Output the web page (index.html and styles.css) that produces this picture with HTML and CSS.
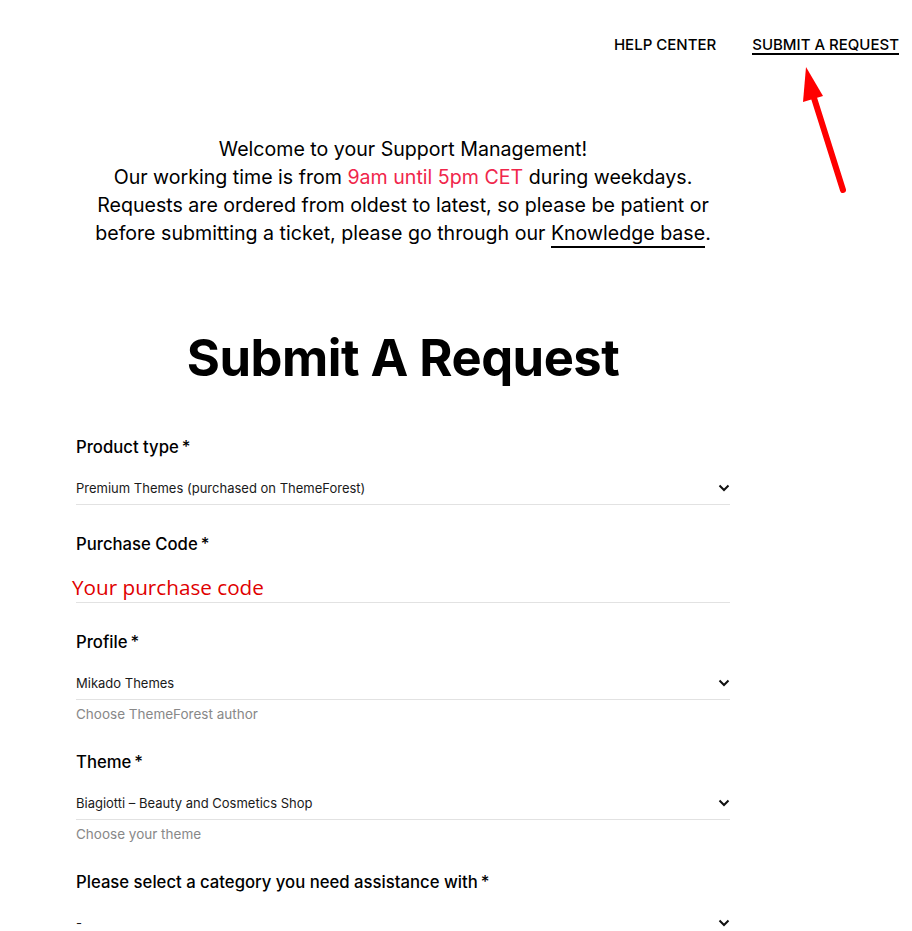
FILE: index.html
```html
<!DOCTYPE html>
<html lang="en">
<head>
    <meta charset="UTF-8">
    <meta name="viewport" content="width=device-width, initial-scale=1.0">
    <title>Submit A Request</title>
    <link rel="stylesheet" href="styles.css">
</head>
<body>
    <header class="top-bar">
        <nav class="nav">
            <a href="#" class="nav-link">HELP CENTER</a>
            <a href="#" class="nav-link active">SUBMIT A REQUEST</a>
        </nav>
        <svg class="arrow" width="60" height="140" viewBox="0 0 60 140">
            <line x1="47" y1="128" x2="18" y2="36" stroke="#ff0000" stroke-width="6" stroke-linecap="round"/>
            <polygon points="10,5 7,40 27,34" fill="#ff0000"/>
        </svg>
    </header>

    <main class="container">
        <div class="intro">
            <p>Welcome to your Support Management!</p>
            <p>Our working time is from <span class="hl">9am until 5pm CET</span> during weekdays.</p>
            <p>Requests are ordered from oldest to latest, so please be patient or</p>
            <p>before submitting a ticket, please go through our <a href="#" class="kb-link">Knowledge base</a>.</p>
        </div>

        <h1 class="title">Submit A Request</h1>

        <form class="form">
            <div class="field">
                <label>Product type<span class="req">*</span></label>
                <div class="select">
                    <span>Premium Themes (purchased on ThemeForest)</span>
                    <svg class="chev" width="12" height="8" viewBox="0 0 12 8"><path d="M1.5 1.5 L6 6 L10.5 1.5" fill="none" stroke="#111" stroke-width="2"/></svg>
                </div>
            </div>

            <div class="field">
                <label>Purchase Code<span class="req">*</span></label>
                <div class="text-input">
                    <span class="code-placeholder">Your purchase code</span>
                </div>
            </div>

            <div class="field">
                <label>Profile<span class="req">*</span></label>
                <div class="select">
                    <span>Mikado Themes</span>
                    <svg class="chev" width="12" height="8" viewBox="0 0 12 8"><path d="M1.5 1.5 L6 6 L10.5 1.5" fill="none" stroke="#111" stroke-width="2"/></svg>
                </div>
                <p class="hint">Choose ThemeForest author</p>
            </div>

            <div class="field">
                <label>Theme<span class="req">*</span></label>
                <div class="select">
                    <span>Biagiotti – Beauty and Cosmetics Shop</span>
                    <svg class="chev" width="12" height="8" viewBox="0 0 12 8"><path d="M1.5 1.5 L6 6 L10.5 1.5" fill="none" stroke="#111" stroke-width="2"/></svg>
                </div>
                <p class="hint">Choose your theme</p>
            </div>

            <div class="field">
                <label>Please select a category you need assistance with<span class="req">*</span></label>
                <div class="select">
                    <span>-</span>
                    <svg class="chev" width="12" height="8" viewBox="0 0 12 8"><path d="M1.5 1.5 L6 6 L10.5 1.5" fill="none" stroke="#111" stroke-width="2"/></svg>
                </div>
            </div>
        </form>
    </main>
</body>
</html>
```

FILE: styles.css
```css
* {
    box-sizing: border-box;
    margin: 0;
    padding: 0;
}

body {
    font-family: 'Inter', 'Roboto', sans-serif;
    color: #000;
    background: #fff;
}

.top-bar {
    position: relative;
    height: 112px;
}

.nav {
    display: flex;
    justify-content: flex-end;
    gap: 36px;
    padding: 36px 13px 0 0;
}

.nav-link {
    font-size: 15px;
    font-weight: 500;
    color: #000;
    text-decoration: none;
    line-height: 17px;
    border-bottom: 2px solid transparent;
}

.nav-link.active {
    border-bottom-color: #000;
}

.arrow {
    position: absolute;
    left: 796px;
    top: 62px;
}

.container {
    width: 654px;
    margin-left: 76px;
}

.intro {
    text-align: center;
    font-size: 19.6px;
    line-height: 28px;
    margin-top: 23px;
}

.hl {
    color: #f0264b;
}

.kb-link {
    color: #000;
    text-decoration: none;
    border-bottom: 2px solid #000;
    padding-bottom: 1px;
}

.title {
    text-align: center;
    font-size: 50.7px;
    font-weight: 700;
    line-height: 60px;
    margin-top: 81px;
    letter-spacing: -0.5px;
}

.form {
    margin-top: 48px;
}

.field {
    margin-bottom: 28px;
}

.field label {
    display: block;
    font-size: 16.7px;
    font-weight: 500;
    line-height: 22px;
    margin-bottom: 22px;
}

.req {
    margin-left: 3px;
}

.select {
    display: flex;
    justify-content: space-between;
    align-items: center;
    height: 25px;
    padding-bottom: 8px;
    font-size: 13px;
    line-height: 17px;
    color: #1a1a1a;
    border-bottom: 1px solid #e2e2e2;
}

.text-input {
    height: 30px;
    border-bottom: 1px solid #e2e2e2;
    margin-top: -4px;
}

.code-placeholder {
    display: block;
    font-family: 'Open Sans', sans-serif;
    font-size: 20.7px;
    color: #e00000;
    margin-left: -4px;
    line-height: 28px;
}

.hint {
    font-size: 13.5px;
    color: #888;
    margin-top: 6px;
    line-height: 17px;
}
```
